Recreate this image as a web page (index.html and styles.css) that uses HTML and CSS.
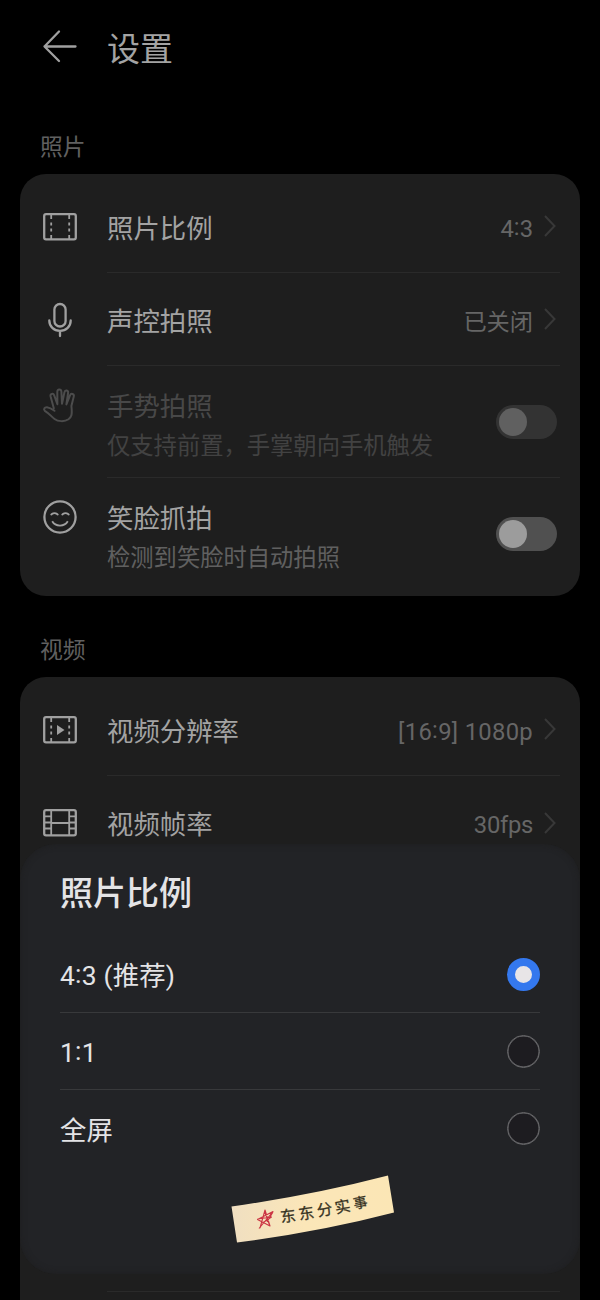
FILE: index.html
```html
<!DOCTYPE html>
<html lang="zh-CN">
<head>
<meta charset="utf-8">
<title>设置</title>
<link rel="stylesheet" href="styles.css">
</head>
<body>
<main class="screen">
  <header class="header">
    <svg class="icon" viewBox="0 0 34 34"><path d="M16 1.500 1.500 16.500l14.500 14.500M1.500 16.500h31"/></svg>
    <h1 class="page-title">设置</h1>
  </header>

  <h2 class="section-label">照片</h2>
  <section class="card">
    <div class="row">
      <svg class="icon" viewBox="0 0 34 34"><rect x="1.2" y="4.2" width="31.6" height="25.2" rx="1.8"/><path class="thin" d="M8.2 5v4M8.2 12.500v3M8.2 18.500v3M8.2 25v4M26.200 5v4M26.200 12.500v3M26.200 18.500v3M26.200 25v4"/></svg>
      <div class="row-body"><span class="name">照片比例</span><span class="value">4<span class="colon">:</span>3</span><svg class="chevron" viewBox="0 0 12 22"><path d="M1 1l9.500 10L1 21"/></svg></div>
    </div>
    <div class="row">
      <svg class="icon" viewBox="0 0 34 34"><rect x="11.4" y="1" width="11.2" height="22.5" rx="5.6"/><path d="M6.300 17.500c0 6 4.500 10.300 10.700 10.300s10.700-4.300 10.700-10.300M17 28v5"/></svg>
      <div class="row-body"><span class="name">声控拍照</span><span class="value cjk">已关闭</span><svg class="chevron" viewBox="0 0 12 22"><path d="M1 1l9.500 10L1 21"/></svg></div>
    </div>
    <div class="row tall disabled">
      <svg class="icon" viewBox="0 0 34 34"><path d="M10.800 20.200 7.600 8.600C6.900 5.600 10.300 4.700 11.200 7.400L14.400 16.200 14.300 4C14.300.8 18.200.8 18.400 3.800L19 15.800 21.400 4.400C22 1.400 25.600 2.200 25.100 5L23.400 16.400 27 7.400C28 4.800 31.400 5.800 30.800 8.400L28.400 18C29.400 27 28.400 29 25.500 31.200 21.500 34 15 33.600 11.500 31 8 28.400 7 26 1.800 22.800.2 21 1.600 19 4 19.200 7 19.500 8.500 20.500 11.500 22.800"/></svg>
      <div class="row-body"><div class="texts"><span class="name">手势拍照</span><span class="hint">仅支持前置，手掌朝向手机触发</span></div><span class="switch"></span></div>
    </div>
    <div class="row tall">
      <svg class="icon" viewBox="0 0 34 34"><circle cx="17" cy="17" r="15.6"/><path class="thin" d="M8 15.300c1-2.800 6-2.800 7 0M19 15.300c1-2.800 6-2.800 7 0M9.200 21.300c3.200 5.700 12.400 5.700 15.600 0"/></svg>
      <div class="row-body"><div class="texts"><span class="name">笑脸抓拍</span><span class="hint">检测到笑脸时自动拍照</span></div><span class="switch"></span></div>
    </div>
  </section>

  <h2 class="section-label video-label">视频</h2>
  <section class="card video-card">
    <div class="row">
      <svg class="icon" viewBox="0 0 34 34"><rect x="1.2" y="4.2" width="31.6" height="25.2" rx="1.8"/><path class="thin" d="M8.2 5v4M8.2 12.500v3M8.2 18.500v3M8.2 25v4M26.200 5v4M26.200 12.500v3M26.200 18.500v3M26.200 25v4"/><path class="solid" d="M14 12l7.500 5-7.500 5z"/></svg>
      <div class="row-body"><span class="name">视频分辨率</span><span class="value wide">[16<span class="colon">:</span>9] 1080p</span><svg class="chevron" viewBox="0 0 12 22"><path d="M1 1l9.500 10L1 21"/></svg></div>
    </div>
    <div class="row">
      <svg class="icon" viewBox="0 0 34 34"><rect x="1.2" y="4.2" width="31.6" height="25.2" rx="1.8"/><path class="thin" d="M8.200 4v25M26.200 4v25M8.200 17h18M2 10.400h6M2 16.500h6M2 22.500h6M26 10.400h6M26 16.500h6M26 22.500h6"/></svg>
      <div class="row-body"><span class="name">视频帧率</span><span class="value tight">30fps</span><svg class="chevron" viewBox="0 0 12 22"><path d="M1 1l9.500 10L1 21"/></svg></div>
    </div>
    <div class="covered-row"></div>
  </section>

  <section class="sheet" role="dialog">
    <h2 class="sheet-title">照片比例</h2>
    <div class="option"><span class="choice">4<span class="colon">:</span>3 (推荐)</span><span class="radio checked"></span></div>
    <div class="option"><span class="choice">1<span class="colon">:</span>1</span><span class="radio"></span></div>
    <div class="option"><span class="choice">全屏</span><span class="radio"></span></div>
    <div class="sticker">
      <svg class="paper" viewBox="0 0 164 70"><defs><linearGradient id="paper" x1="0" x2="1"><stop offset="0" stop-color="#f0dfc1"/><stop offset=".45" stop-color="#fbe6b8"/><stop offset="1" stop-color="#fbe6b5"/></linearGradient></defs>
        <path fill="url(#paper)" d="M.5 31.500Q82 20 157 .5L163 37.500Q88 57 6 67.500z"/>
        <path class="star" d="M29 53 34 35 39 51 26.500 44.500 42 36.500 28 53.500M26.500 44l14-2-9 6M33.500 36l5 14M42 37l-6 10"/>
        <g class="sticker-text"><text transform="translate(50 47.500) rotate(-7)">东</text><text transform="translate(68.500 45) rotate(-9)">东</text><text transform="translate(87 41.500) rotate(-10)">分</text><text transform="translate(105 38.500) rotate(-11)">实</text><text class="narrow" transform="translate(123.500 34) rotate(-12)">事</text></g>
      </svg>
    </div>
  </section>
</main>
</body>
</html>
```

FILE: styles.css
```css
* { box-sizing: border-box; }
body { margin: 0; background: #000; }
h1, h2 { margin: 0; font-weight: 400; }

.screen {
  position: relative;
  width: 600px;
  height: 1300px;
  padding: 0 20px;
  overflow: hidden;
  background: #000;
  color: #a3a3a3;
  font-family: Roboto, "Noto Sans CJK SC", sans-serif;
  font-size: 26.4px;
  line-height: 36px;
}

.header {
  display: flex;
  align-items: center;
  height: 94px;
  padding-left: 23px;
}
.page-title { margin-left: 30px; font-size: 33px; line-height: 44px; padding-top: 6px; }

.icon {
  flex: none;
  width: 34px;
  height: 34px;
  overflow: visible;
  fill: none;
  stroke: #a0a0a0;
  stroke-width: 2.3;
  stroke-linecap: round;
  stroke-linejoin: round;
}
.icon .thin { stroke-width: 1.8; stroke-linecap: butt; }
.icon .solid { fill: #a0a0a0; stroke: none; }

.section-label {
  height: 80px;
  padding: 39px 20px 0;
  color: #606060;
  font-size: 22.8px;
  line-height: 30px;
}
.video-label { height: 81px; padding-top: 40px; }

.card { padding: 6px 0; border-radius: 26px; background: #1e1e1e; }
.video-card { height: 660px; }

.row { display: flex; align-items: center; height: 93px; padding: 0 20px 0 23px; }
.row-body {
  display: flex;
  flex: 1;
  align-items: center;
  height: 100%;
  margin-left: 30px;
  border-bottom: 1px solid #2a2a2a;
}
.row.tall { height: 112px; align-items: flex-start; }
.row.tall .icon { margin-top: 22px; }
.row.tall:last-child .row-body { border: 0; }
.video-card .row:nth-child(2) .row-body { border: 0; }
.name { margin-right: auto; padding-top: 5px; }
.value { padding-top: 5px; color: #666; font-size: 23.8px; }
.value.cjk { font-size: 23.2px; }
.value.wide { letter-spacing: .3px; }
.value.tight { letter-spacing: -.3px; }
.colon { display: inline-block; transform: translateY(-2px); }
.chevron {
  width: 12px;
  height: 22px;
  margin: 0 4px 0 11px;
  fill: none;
  stroke: #383838;
  stroke-width: 2;
}
.texts { display: flex; flex-direction: column; gap: 4px; margin-right: auto; padding-top: 8px; }
.texts .name { padding: 0; }
.hint { color: #606060; font-size: 23.3px; line-height: 34px; }

.switch {
  width: 61px;
  height: 34px;
  margin-right: 3px;
  padding: 3px;
  border-radius: 17px;
  background: #505050;
}
.switch::before {
  display: block;
  width: 28px;
  height: 28px;
  border-radius: 50%;
  background: #9c9c9c;
  content: "";
}
.disabled .name { color: #484848; }
.disabled .hint { color: #424242; }
.disabled .icon { stroke: #4c4c4c; stroke-width: 2; }
.disabled .switch { background: #333; }
.disabled .switch::before { background: #606060; }

.covered-row { height: 423px; margin: 0 20px 0 87px; border-bottom: 1px solid #2a2a2a; }

.sheet {
  position: absolute;
  top: 844px;
  left: 20px;
  width: 560px;
  height: 430px;
  padding: 26px 40px 0;
  border-radius: 36px;
  background: #222326;
  box-shadow: inset 0 0 6px #1e1e1f;
  color: #e4e4e6;
}
.sheet-title { height: 66px; font-size: 33px; line-height: 48px; font-weight: 500; }
.option {
  display: flex;
  align-items: center;
  justify-content: space-between;
  height: 77px;
  border-bottom: 1px solid #38393b;
}
.option:nth-of-type(3) { border-bottom: 0; }
.choice { padding-top: 4px; letter-spacing: .2px; }
.radio { width: 33px; height: 33px; border: 1.5px solid #6a6a6c; border-radius: 50%; background: #1d1c20; box-shadow: inset 0 0 0 .5px #6a6a6c; }
.radio.checked { border: 8px solid #3478ee; background: #e8e5e7; box-shadow: none; }

.sticker { margin: 8px 0 0 171px; }
.paper { display: block; width: 164px; height: 70px; }
.star { fill: none; stroke: #cb3544; stroke-width: 1.1; stroke-linejoin: round; }
.sticker-text { fill: #363222; font: 400 15.500px "Noto Sans CJK SC", sans-serif; stroke: #363222; stroke-width: .3; }
.sticker-text .narrow { font-size: 14px; }
```
